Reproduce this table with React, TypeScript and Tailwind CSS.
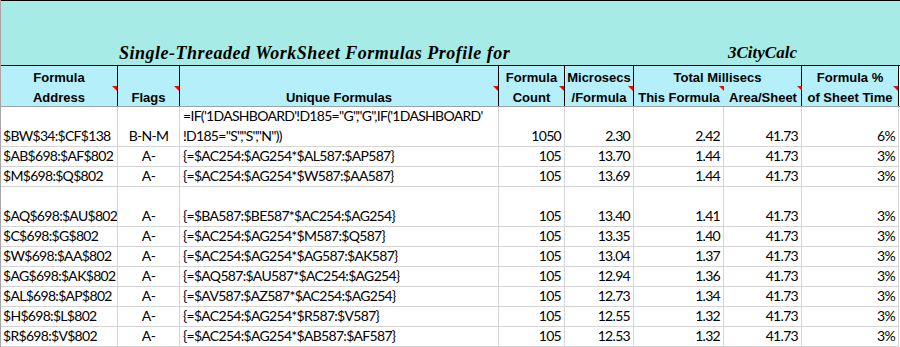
import React from 'react';

interface Row {
  address: string;
  flags: string;
  formula: string[];
  count: string;
  micro: string;
  thisMs: string;
  areaMs: string;
  pct: string;
  tall?: boolean;
}

const rows: Row[] = [
  {
    address: '$BW$34:$CF$138',
    flags: 'B-N-M',
    formula: ['=IF(\'1DASHBOARD\'!D185="G","G",IF(\'1DASHBOARD\'', '!D185="S","S","N"))'],
    count: '1050',
    micro: '2.30',
    thisMs: '2.42',
    areaMs: '41.73',
    pct: '6%',
    tall: true,
  },
  { address: '$AB$698:$AF$802', flags: 'A-', formula: ['{=$AC254:$AG254*$AL587:$AP587}'], count: '105', micro: '13.70', thisMs: '1.44', areaMs: '41.73', pct: '3%' },
  { address: '$M$698:$Q$802', flags: 'A-', formula: ['{=$AC254:$AG254*$W587:$AA587}'], count: '105', micro: '13.69', thisMs: '1.44', areaMs: '41.73', pct: '3%' },
  { address: '$AQ$698:$AU$802', flags: 'A-', formula: ['{=$BA587:$BE587*$AC254:$AG254}'], count: '105', micro: '13.40', thisMs: '1.41', areaMs: '41.73', pct: '3%', tall: true },
  { address: '$C$698:$G$802', flags: 'A-', formula: ['{=$AC254:$AG254*$M587:$Q587}'], count: '105', micro: '13.35', thisMs: '1.40', areaMs: '41.73', pct: '3%' },
  { address: '$W$698:$AA$802', flags: 'A-', formula: ['{=$AC254:$AG254*$AG587:$AK587}'], count: '105', micro: '13.04', thisMs: '1.37', areaMs: '41.73', pct: '3%' },
  { address: '$AG$698:$AK$802', flags: 'A-', formula: ['{=$AQ587:$AU587*$AC254:$AG254}'], count: '105', micro: '12.94', thisMs: '1.36', areaMs: '41.73', pct: '3%' },
  { address: '$AL$698:$AP$802', flags: 'A-', formula: ['{=$AV587:$AZ587*$AC254:$AG254}'], count: '105', micro: '12.73', thisMs: '1.34', areaMs: '41.73', pct: '3%' },
  { address: '$H$698:$L$802', flags: 'A-', formula: ['{=$AC254:$AG254*$R587:$V587}'], count: '105', micro: '12.55', thisMs: '1.32', areaMs: '41.73', pct: '3%' },
  { address: '$R$698:$V$802', flags: 'A-', formula: ['{=$AC254:$AG254*$AB587:$AF587}'], count: '105', micro: '12.53', thisMs: '1.32', areaMs: '41.73', pct: '3%' },
];

// red comment marker in the top-right corner of a cell
function Marker() {
  return (
    <svg className="absolute top-0 right-0" width="5" height="5" viewBox="0 0 5 5">
      <polygon points="0,0 5,0 5,5" fill="#ff0000" />
    </svg>
  );
}

function HeadCell({ w, top, bottom, marker }: { w: string; top?: string; bottom: string; marker?: boolean }) {
  return (
    <div className={`${w} shrink-0 border-r border-black flex flex-col`}>
      <div className="h-[20px] flex items-end justify-center leading-[16px] whitespace-nowrap">{top}</div>
      <div className="relative h-[20px] flex items-end justify-center leading-[16px] whitespace-nowrap">
        {bottom}
        {marker && <Marker />}
      </div>
    </div>
  );
}

export default function App() {
  const cell =
    'shrink-0 border-r border-b border-[#d4d4d4] flex items-end leading-[20px] whitespace-nowrap overflow-hidden';

  return (
    <div className="w-[900px] h-[347px] overflow-hidden bg-white border-l border-[#a6a6a6]">
      {/* Title band */}
      <div className="h-[66px] bg-[#a6ebe6] border-t border-b border-black flex items-end pb-[2px] font-['Liberation_Serif',serif] italic font-bold text-[18px] text-black">
        <div className="w-[118px] shrink-0" />
        <div className="w-[609px] shrink-0 leading-[20px] tracking-[0.5px]">
          Single-Threaded WorkSheet Formulas Profile for
        </div>
        <div className="leading-[20px] text-[17px]">3CityCalc</div>
      </div>

      {/* Column headers */}
      <div className="h-[41px] flex bg-[#b4effa] border-b border-[#a0a0a0] font-['Liberation_Sans',Arial,sans-serif] font-bold text-[13px] text-black">
        <HeadCell w="w-[117px]" top="Formula" bottom="Address" marker />
        <HeadCell w="w-[62px]" bottom="Flags" marker />
        <HeadCell w="w-[319px]" bottom="Unique Formulas" marker />
        <HeadCell w="w-[66px]" top="Formula" bottom="Count" marker />
        <HeadCell w="w-[69px]" top="Microsecs" bottom="/Formula" marker />
        <div className="w-[168px] shrink-0 border-r border-black flex flex-col">
          <div className="h-[20px] flex items-end justify-center leading-[16px]">Total Millisecs</div>
          <div className="h-[20px] flex">
            <div className="relative w-[90px] shrink-0 flex items-end justify-center leading-[16px] whitespace-nowrap">
              This Formula
              <Marker />
            </div>
            <div className="relative w-[78px] shrink-0 flex items-end justify-center leading-[16px] whitespace-nowrap">
              Area/Sheet
              <Marker />
            </div>
          </div>
        </div>
        <HeadCell w="w-[97px]" top="Formula %" bottom="of Sheet Time" marker />
        <div className="flex-1 bg-white" />
      </div>

      {/* Body rows */}
      <div className="font-['Lato',sans-serif] text-[14px] tracking-[-0.7px] text-black">
        {rows.map((r) => (
          <div key={r.address} className={`flex ${r.tall ? 'h-[40px]' : 'h-[20px]'}`}>
            <div className={`${cell} w-[117px] pl-[2px]`}>{r.address}</div>
            <div className={`${cell} w-[62px] justify-center`}>{r.flags}</div>
            <div className={`${cell} w-[319px] pl-[3px]`}>
              <div>
                {r.formula.map((line) => (
                  <div key={line}>{line}</div>
                ))}
              </div>
            </div>
            <div className={`${cell} w-[66px] justify-end pr-[3px]`}>{r.count}</div>
            <div className={`${cell} w-[69px] justify-end pr-[3px]`}>{r.micro}</div>
            <div className={`${cell} w-[90px] justify-end pr-[3px]`}>{r.thisMs}</div>
            <div className={`${cell} w-[78px] justify-end pr-[3px]`}>{r.areaMs}</div>
            <div className={`${cell} w-[97px] justify-end pr-[3px]`}>{r.pct}</div>
          </div>
        ))}
      </div>
    </div>
  );
}
